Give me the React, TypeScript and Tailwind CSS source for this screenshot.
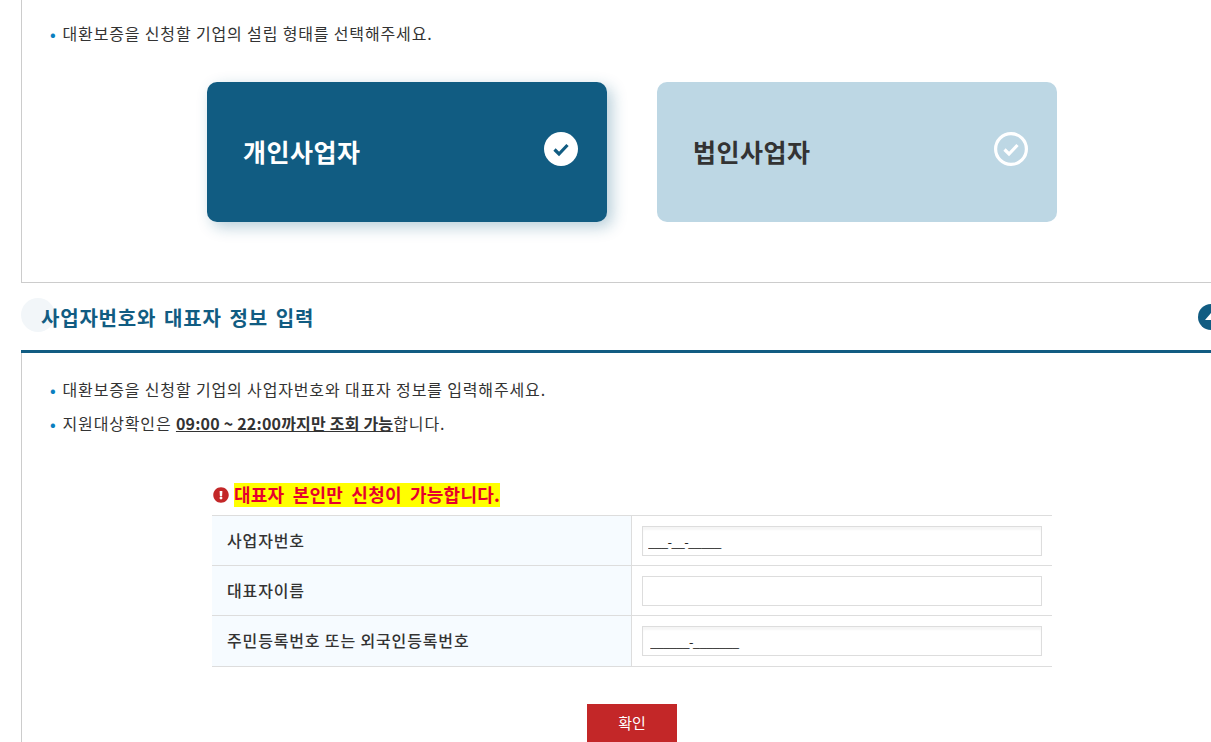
import { FaExclamationCircle } from 'react-icons/fa'

function CheckIcon({ active }: { active: boolean }) {
  if (active) {
    return (
      <svg width="34" height="34" viewBox="0 0 34 34">
        <circle cx="17" cy="17" r="17" fill="#fff" />
        <path d="M10.5 17.5l4.5 4.5 8.5-9" fill="none" stroke="#115c82" strokeWidth="3.2" />
      </svg>
    )
  }
  return (
    <svg width="34" height="34" viewBox="0 0 34 34">
      <circle cx="17" cy="17" r="15.4" fill="none" stroke="#fff" strokeWidth="3.2" />
      <path d="M10.5 17.5l4.5 4.5 8.5-9" fill="none" stroke="#fff" strokeWidth="3.2" />
    </svg>
  )
}

function TypeCard({ label, active }: { label: string; active?: boolean }) {
  return (
    <div
      className={
        active
          ? 'w-[400px] h-[140px] rounded-[10px] bg-[#115c82] text-white flex justify-between pl-[36px] pr-[29px] shadow-[5px_5px_15px_rgba(17,92,130,0.3)]'
          : 'w-[400px] h-[140px] rounded-[10px] bg-[#bdd7e4] text-[#333333] flex justify-between pl-[36px] pr-[29px]'
      }
    >
      <span className="text-[25px] font-bold leading-[36px] mt-[51px] tracking-[0.5px]">{label}</span>
      <span className="mt-[50px]">
        <CheckIcon active={!!active} />
      </span>
    </div>
  )
}

function Bullet({ children }: { children: React.ReactNode }) {
  return (
    <p className="h-[34px] leading-[33px] text-[16px] text-[#333333] tracking-[0.85px] flex">
      <span className="w-[12.5px] text-[#0a7fc0] font-bold tracking-normal text-[15px]">•</span>
      <span>{children}</span>
    </p>
  )
}

function Row({ label, value, pad, last }: { label: string; value?: string; pad?: string; last?: boolean }) {
  return (
    <div className={last ? 'flex h-[51px] border-b border-[#dddddd]' : 'flex h-[50px] border-b border-[#dddddd]'}>
      <div className="w-[420px] bg-[#f6fbff] border-r border-[#dddddd] pl-[15px] pb-[2px] flex items-center text-[16px] font-medium tracking-[0.85px] text-[#333333]">
        {label}
      </div>
      <div className="flex-1 pl-[10px] pt-[10px]">
        <input
          readOnly
          value={value ?? ''}
          className={`w-[400px] h-[30px] border border-[#dddddd] text-[13px] tracking-[-0.75px] text-[#222222] outline-none ${pad ?? 'pl-[5px]'} ${value ? 'shadow-[inset_0_3px_2px_rgba(0,0,0,0.04)]' : ''}`}
        />
      </div>
    </div>
  )
}

export default function App() {
  return (
    <div className="h-[742px] overflow-hidden bg-white font-['Noto_Sans_CJK_KR',sans-serif]">
      <div className="ml-[21px] w-[1222px]">
        {/* 설립 형태 선택 */}
        <section className="border-l border-b border-[#cccccc] h-[283px] pt-[17px] pl-[28px]">
          <Bullet>대환보증을 신청할 기업의 설립 형태를 선택해주세요.</Bullet>
          <div className="flex justify-center gap-[50px] mt-[31px] -ml-[29px]">
            <TypeCard label="개인사업자" active />
            <TypeCard label="법인사업자" />
          </div>
        </section>

        {/* 아코디언 헤더 */}
        <div className="relative h-[70px] border-b-[3px] border-[#115c82] flex items-center justify-between pl-[20px] pr-[19px]">
          <span className="absolute left-0 top-[15px] w-[34px] h-[34px] rounded-full bg-[#f2f6f9]" />
          <h2 className="relative top-px text-[20px] font-bold text-[#115c82] tracking-[0.8px] [word-spacing:2.5px]">
            사업자번호와 대표자 정보 입력
          </h2>
          <span className="w-[26px] h-[26px] rounded-full bg-[#115c82] flex items-center justify-center">
            <svg width="14" height="10" viewBox="0 0 14 10">
              <path d="M7 1L13 8H1z" fill="#fff" />
            </svg>
          </span>
        </div>

        {/* 정보 입력 */}
        <section className="border-l border-[#cccccc] h-[400px] pt-[20px] pl-[28px]">
          <Bullet>대환보증을 신청할 기업의 사업자번호와 대표자 정보를 입력해주세요.</Bullet>
          <Bullet>
            지원대상확인은{' '}
            <strong className="font-bold underline tracking-[0.2px]">09:00 ~ 22:00까지만 조회 가능</strong>합니다.
          </Bullet>

          <div className="w-[840px] ml-[162px] mt-[42px]">
            <div className="flex items-center h-[24px] mb-[8px] pl-px gap-[5px]">
              <FaExclamationCircle className="text-[#c32728] text-[16px]" />
              <span className="bg-[#ffff00] text-[#e6002d] text-[18px] font-bold leading-[23px] pb-px tracking-[0.25px] [word-spacing:3.9px]">
                대표자 본인만 신청이 가능합니다.
              </span>
            </div>
            <div className="border-t border-[#dddddd]">
              <Row label="사업자번호" value="___-__-_____" />
              <Row label="대표자이름" />
              <Row label="주민등록번호 또는 외국인등록번호" value="______-_______" pad="pl-[7px]" last />
            </div>
            <div className="flex justify-center mt-[37px]">
              <button className="w-[90px] h-[40px] bg-[#c32728] text-white text-[15px] pb-[2px]">확인</button>
            </div>
          </div>
        </section>
      </div>
    </div>
  )
}
